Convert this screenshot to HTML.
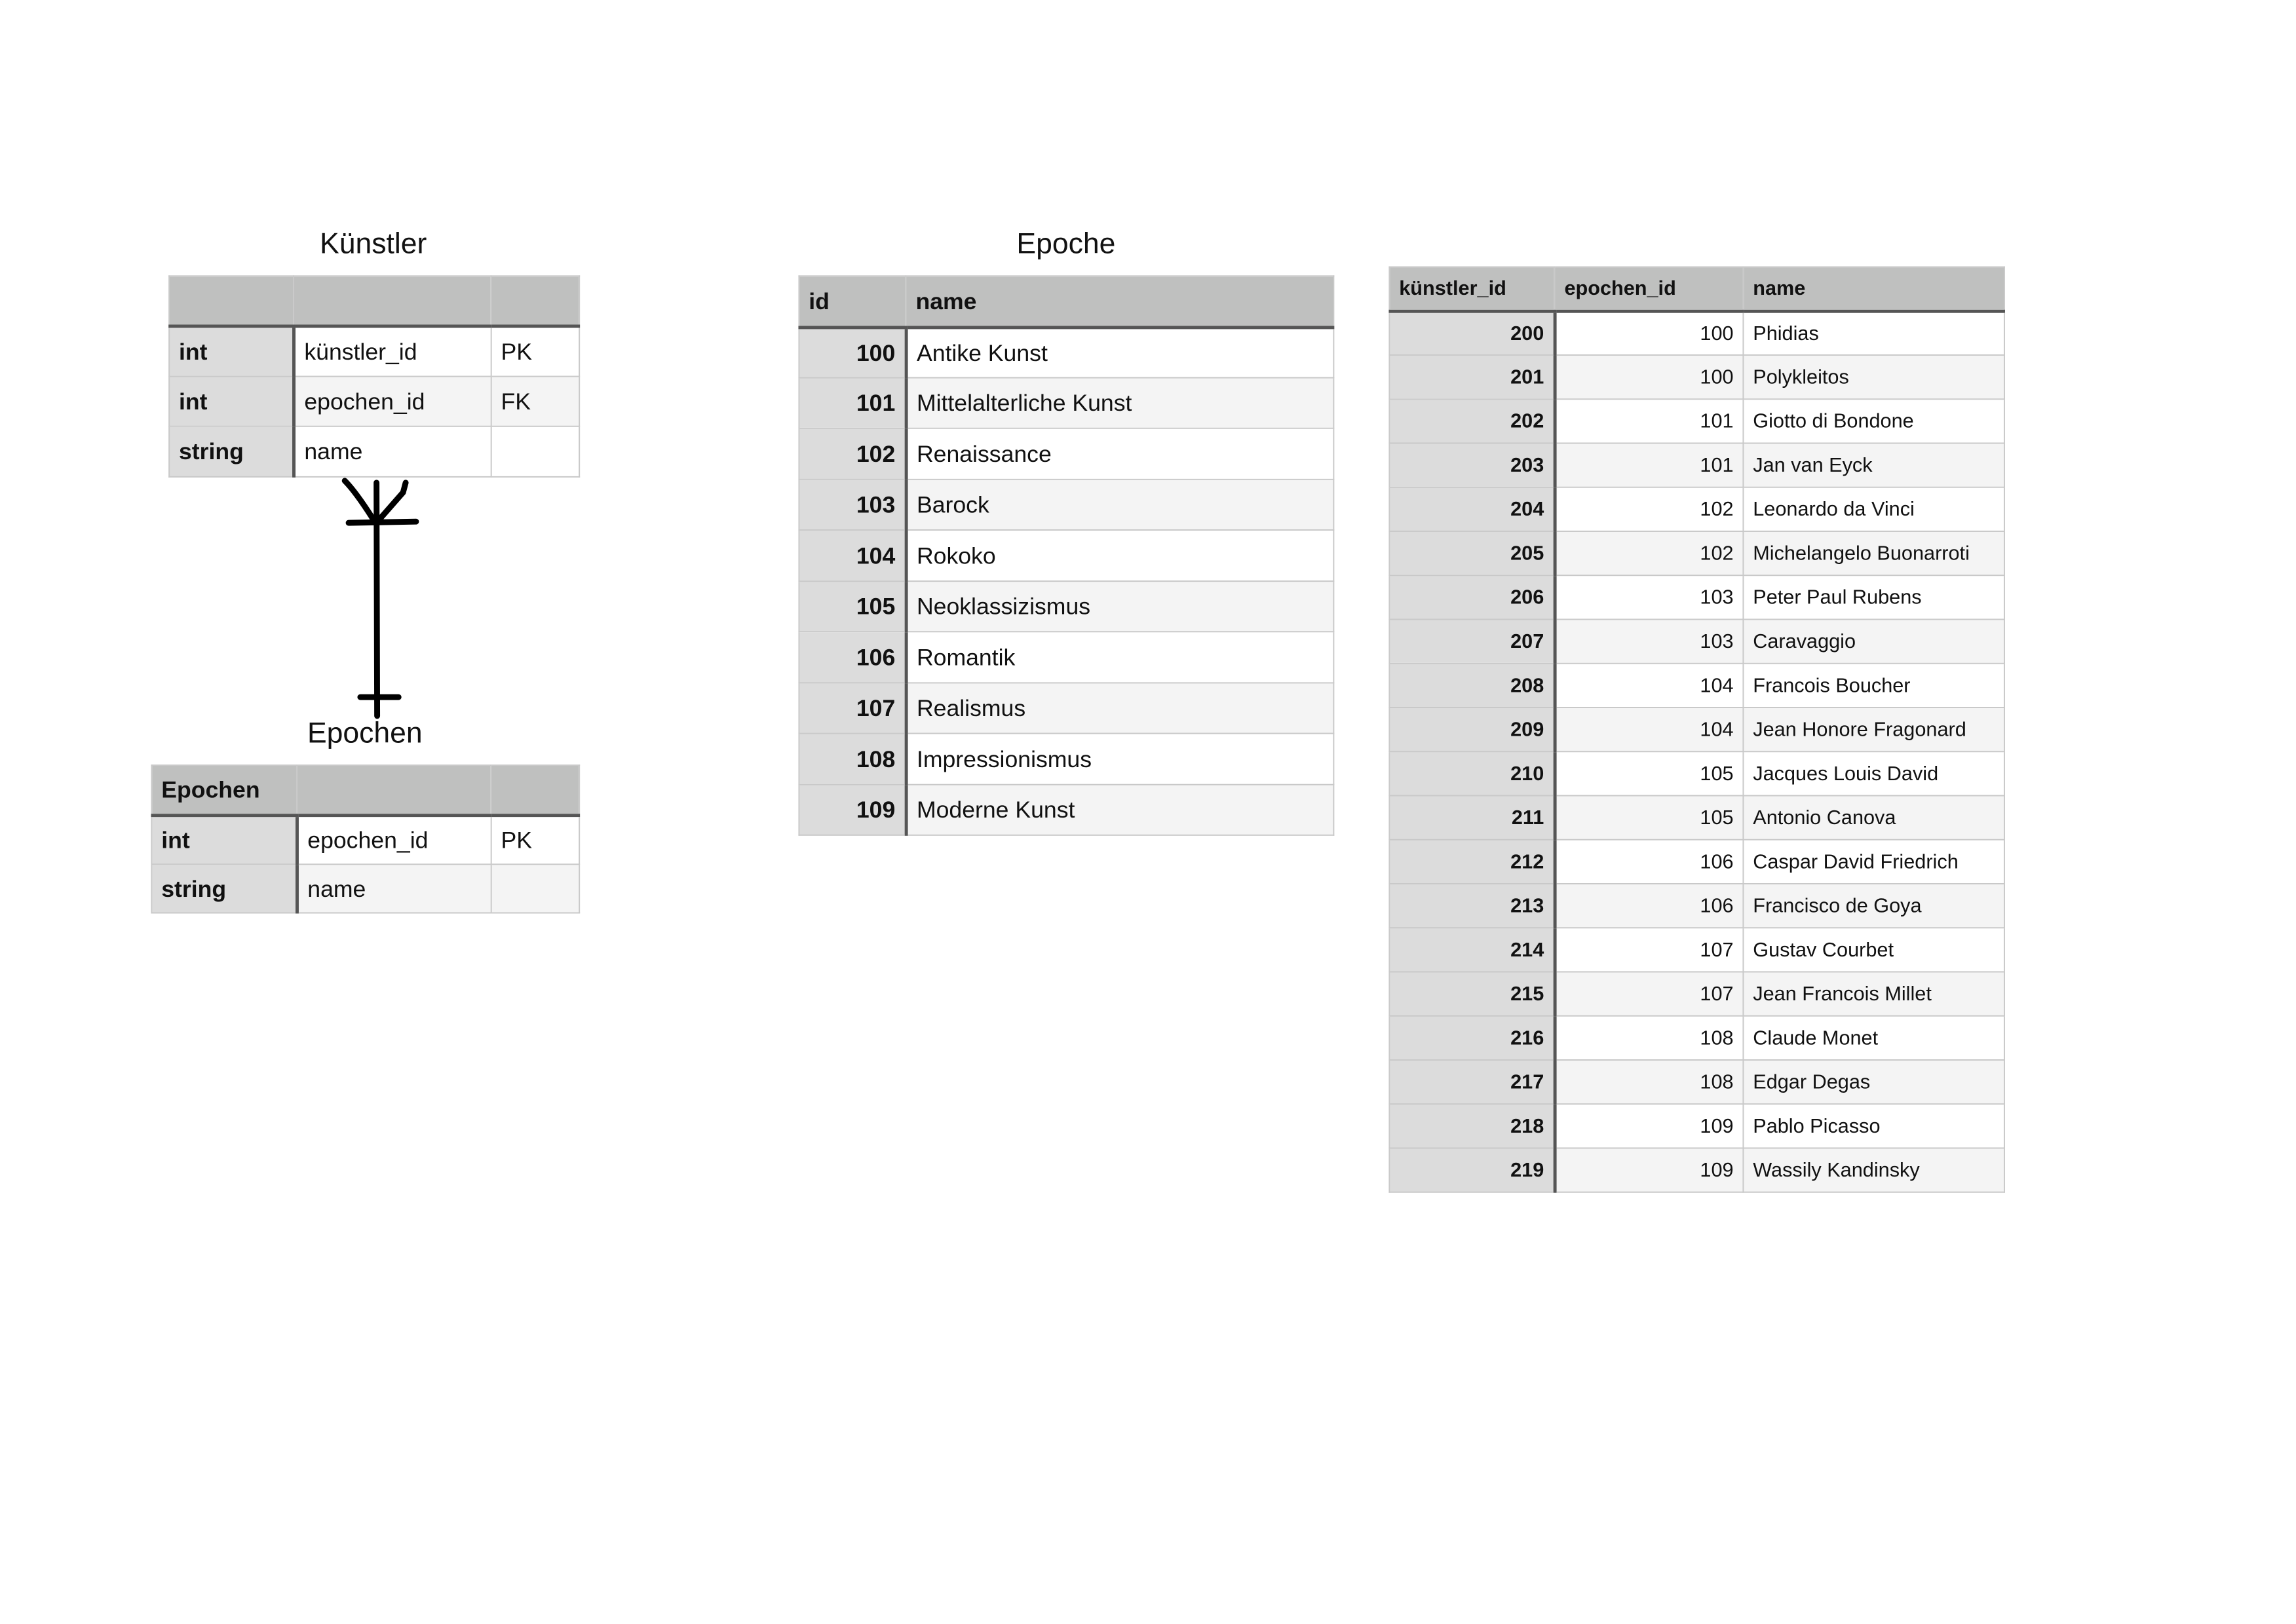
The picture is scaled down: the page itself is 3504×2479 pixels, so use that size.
<!DOCTYPE html>
<html><head><meta charset="utf-8">
<style>
html,body{margin:0;padding:0;background:#fff;width:3504px;height:2479px;overflow:hidden;font-family:"Liberation Sans",Arial,sans-serif;color:#111;}
#wrap{position:absolute;left:0;top:0;width:3504px;height:2479px;transform:scale(0.989);transform-origin:0 0;}
.t{position:absolute;border-collapse:collapse;table-layout:fixed;}
.t td{border:2px solid #c9c9c9;padding:0 14px;white-space:nowrap;overflow:hidden;}
.t tr.h td{background:#bfc0bf;font-weight:bold;border-bottom:5px solid #555;}
.t td.f{background:#dcdcdc;font-weight:bold;border-right:5px solid #555;}
.t tr.h td.f{border-right:2px solid #c9c9c9;}
.t tr.g td{background:#f4f4f4;}
.t tr.g td.f,.t tr.w td.f{background:#dcdcdc;}
.t tr.w td{background:#fff;}
.r{text-align:right;}
.title{position:absolute;font-size:45px;transform:translateX(-50%);white-space:nowrap;}
.k{font-size:36px;}
.n{font-size:31px;font-family:"Liberation Sans Narrow","Liberation Sans",sans-serif;}
</style></head><body><div id="wrap">

<div class="title" style="left:576px;top:350px;">Künstler</div>
<table class="t k" style="left:260px;top:425px;width:633px;">
<colgroup><col style="width:192px"><col style="width:305px"><col style="width:136px"></colgroup>
<tr class="h" style="height:77px"><td class="f"></td><td></td><td></td></tr>
<tr class="w" style="height:78px"><td class="f">int</td><td>künstler_id</td><td>PK</td></tr>
<tr class="g" style="height:77px"><td class="f">int</td><td>epochen_id</td><td>FK</td></tr>
<tr class="w" style="height:78px"><td class="f">string</td><td>name</td><td></td></tr>
</table>

<svg style="position:absolute;left:500px;top:730px" width="180" height="390" viewBox="0 0 180 390">
<g stroke="#000" stroke-width="9" fill="none" stroke-linecap="round" stroke-linejoin="round">
<path d="M81 15 L82 375"/>
<path d="M32 12 Q50 30 80 78 Q100 55 122 30 L126 15"/>
<path d="M38 77 L142 75"/>
<path d="M56 346 L115 346"/>
</g></svg>

<div class="title" style="left:563px;top:1105px;">Epochen</div>
<table class="t k" style="left:233px;top:1180px;width:660px;">
<colgroup><col style="width:224px"><col style="width:300px"><col style="width:136px"></colgroup>
<tr class="h" style="height:77px"><td class="f">Epochen</td><td></td><td></td></tr>
<tr class="w" style="height:76px"><td class="f">int</td><td>epochen_id</td><td>PK</td></tr>
<tr class="g" style="height:75px"><td class="f">string</td><td>name</td><td></td></tr>
</table>

<div class="title" style="left:1645px;top:350px;">Epoche</div>
<table class="t k" style="left:1232px;top:425px;width:825px;">
<colgroup><col style="width:165px"><col style="width:660px"></colgroup>
<tr class="h" style="height:79px"><td class="f">id</td><td>name</td></tr>
<tr class="w" style="height:78px"><td class="f r">100</td><td>Antike Kunst</td></tr>
<tr class="g" style="height:78px"><td class="f r">101</td><td>Mittelalterliche Kunst</td></tr>
<tr class="w" style="height:79px"><td class="f r">102</td><td>Renaissance</td></tr>
<tr class="g" style="height:78px"><td class="f r">103</td><td>Barock</td></tr>
<tr class="w" style="height:79px"><td class="f r">104</td><td>Rokoko</td></tr>
<tr class="g" style="height:78px"><td class="f r">105</td><td>Neoklassizismus</td></tr>
<tr class="w" style="height:79px"><td class="f r">106</td><td>Romantik</td></tr>
<tr class="g" style="height:78px"><td class="f r">107</td><td>Realismus</td></tr>
<tr class="w" style="height:79px"><td class="f r">108</td><td>Impressionismus</td></tr>
<tr class="g" style="height:78px"><td class="f r">109</td><td>Moderne Kunst</td></tr>
</table>

<table class="t n" style="left:2143px;top:411px;width:949px;">
<colgroup><col style="width:255px"><col style="width:291px"><col style="width:403px"></colgroup>
<tr class="h" style="height:68px"><td class="f">künstler_id</td><td>epochen_id</td><td>name</td></tr>
<tr class="w" style="height:68px"><td class="f r">200</td><td class="r">100</td><td>Phidias</td></tr>
<tr class="g" style="height:68px"><td class="f r">201</td><td class="r">100</td><td>Polykleitos</td></tr>
<tr class="w" style="height:68px"><td class="f r">202</td><td class="r">101</td><td>Giotto di Bondone</td></tr>
<tr class="g" style="height:68px"><td class="f r">203</td><td class="r">101</td><td>Jan van Eyck</td></tr>
<tr class="w" style="height:68px"><td class="f r">204</td><td class="r">102</td><td>Leonardo da Vinci</td></tr>
<tr class="g" style="height:68px"><td class="f r">205</td><td class="r">102</td><td>Michelangelo Buonarroti</td></tr>
<tr class="w" style="height:68px"><td class="f r">206</td><td class="r">103</td><td>Peter Paul Rubens</td></tr>
<tr class="g" style="height:68px"><td class="f r">207</td><td class="r">103</td><td>Caravaggio</td></tr>
<tr class="w" style="height:68px"><td class="f r">208</td><td class="r">104</td><td>Francois Boucher</td></tr>
<tr class="g" style="height:68px"><td class="f r">209</td><td class="r">104</td><td>Jean Honore Fragonard</td></tr>
<tr class="w" style="height:68px"><td class="f r">210</td><td class="r">105</td><td>Jacques Louis David</td></tr>
<tr class="g" style="height:68px"><td class="f r">211</td><td class="r">105</td><td>Antonio Canova</td></tr>
<tr class="w" style="height:68px"><td class="f r">212</td><td class="r">106</td><td>Caspar David Friedrich</td></tr>
<tr class="g" style="height:68px"><td class="f r">213</td><td class="r">106</td><td>Francisco de Goya</td></tr>
<tr class="w" style="height:68px"><td class="f r">214</td><td class="r">107</td><td>Gustav Courbet</td></tr>
<tr class="g" style="height:68px"><td class="f r">215</td><td class="r">107</td><td>Jean Francois Millet</td></tr>
<tr class="w" style="height:68px"><td class="f r">216</td><td class="r">108</td><td>Claude Monet</td></tr>
<tr class="g" style="height:68px"><td class="f r">217</td><td class="r">108</td><td>Edgar Degas</td></tr>
<tr class="w" style="height:68px"><td class="f r">218</td><td class="r">109</td><td>Pablo Picasso</td></tr>
<tr class="g" style="height:68px"><td class="f r">219</td><td class="r">109</td><td>Wassily Kandinsky</td></tr>
</table>

</div></body></html>
